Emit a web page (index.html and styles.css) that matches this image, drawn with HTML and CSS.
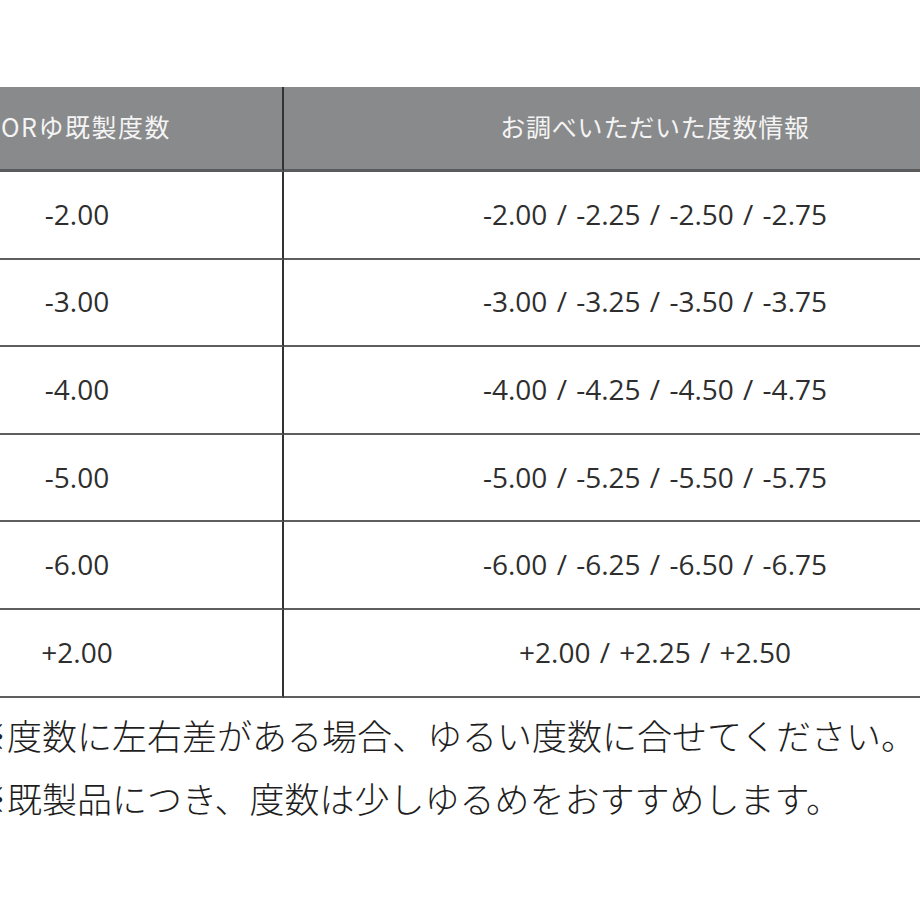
FILE: index.html
```html
<!DOCTYPE html>
<html lang="ja">
<head>
<meta charset="utf-8">
<link rel="stylesheet" href="styles.css">
</head>
<body>
<div class="page">
  <div class="table">
    <div class="cell head left"><span class="head-left-text">ORゆ既製度数</span></div>
    <div class="cell head right">お調べいただいた度数情報</div>

    <div class="cell left num">-2.00</div>
    <div class="cell right num">-2.00 / -2.25 / -2.50 / -2.75</div>

    <div class="cell left num">-3.00</div>
    <div class="cell right num">-3.00 / -3.25 / -3.50 / -3.75</div>

    <div class="cell left num">-4.00</div>
    <div class="cell right num">-4.00 / -4.25 / -4.50 / -4.75</div>

    <div class="cell left num">-5.00</div>
    <div class="cell right num">-5.00 / -5.25 / -5.50 / -5.75</div>

    <div class="cell left num">-6.00</div>
    <div class="cell right num">-6.00 / -6.25 / -6.50 / -6.75</div>

    <div class="cell left num">+2.00</div>
    <div class="cell right num">+2.00 / +2.25 / +2.50</div>
  </div>
  <div class="notes">
    <p class="note">※度数に左右差がある場合、ゆるい度数に合せてください。</p>
    <p class="note">※既製品につき、度数は少しゆるめをおすすめします。</p>
  </div>
</div>
</body>
</html>
```

FILE: styles.css
```css
html, body {
  margin: 0;
  padding: 0;
  background: #ffffff;
  overflow: hidden;
  width: 920px;
  height: 920px;
}

.page {
  padding-top: 87px;
  margin-left: -128px;
  width: 1160px;
}

.table {
  display: grid;
  grid-template-columns: 412px 742px;
  grid-template-rows: 85px repeat(6, 87.6px);
}

.cell {
  display: flex;
  align-items: center;
  justify-content: center;
  box-sizing: border-box;
  border-bottom: 2px solid #5e5e5e;
}

.cell.left {
  border-right: 2px solid #333333;
}

.head {
  background: #898a8b;
  color: #f4f4f4;
  font-family: "Noto Sans CJK JP", "Open Sans", sans-serif;
  font-size: 25px;
  letter-spacing: 0.8px;
  border-bottom: 3px solid #5a5b5c;
  padding-bottom: 4px;
}

.head.left {
  justify-content: flex-start;
  padding-left: 129px;
}

.head-left-text {
  letter-spacing: 1.5px;
}

.num {
  font-family: "Open Sans", "Noto Sans CJK JP", sans-serif;
  font-size: 28px;
  color: #2e2e2e;
  word-spacing: 2px;
  padding-bottom: 2px;
}

.notes {
  margin-top: 5px;
  margin-left: 100px;
}

.note {
  margin: 0;
  font-family: "Noto Sans CJK JP", sans-serif;
  font-size: 35px;
  line-height: 63px;
  color: #1e1e1e;
  font-weight: 300;
  letter-spacing: 0;
  white-space: nowrap;
}
```
